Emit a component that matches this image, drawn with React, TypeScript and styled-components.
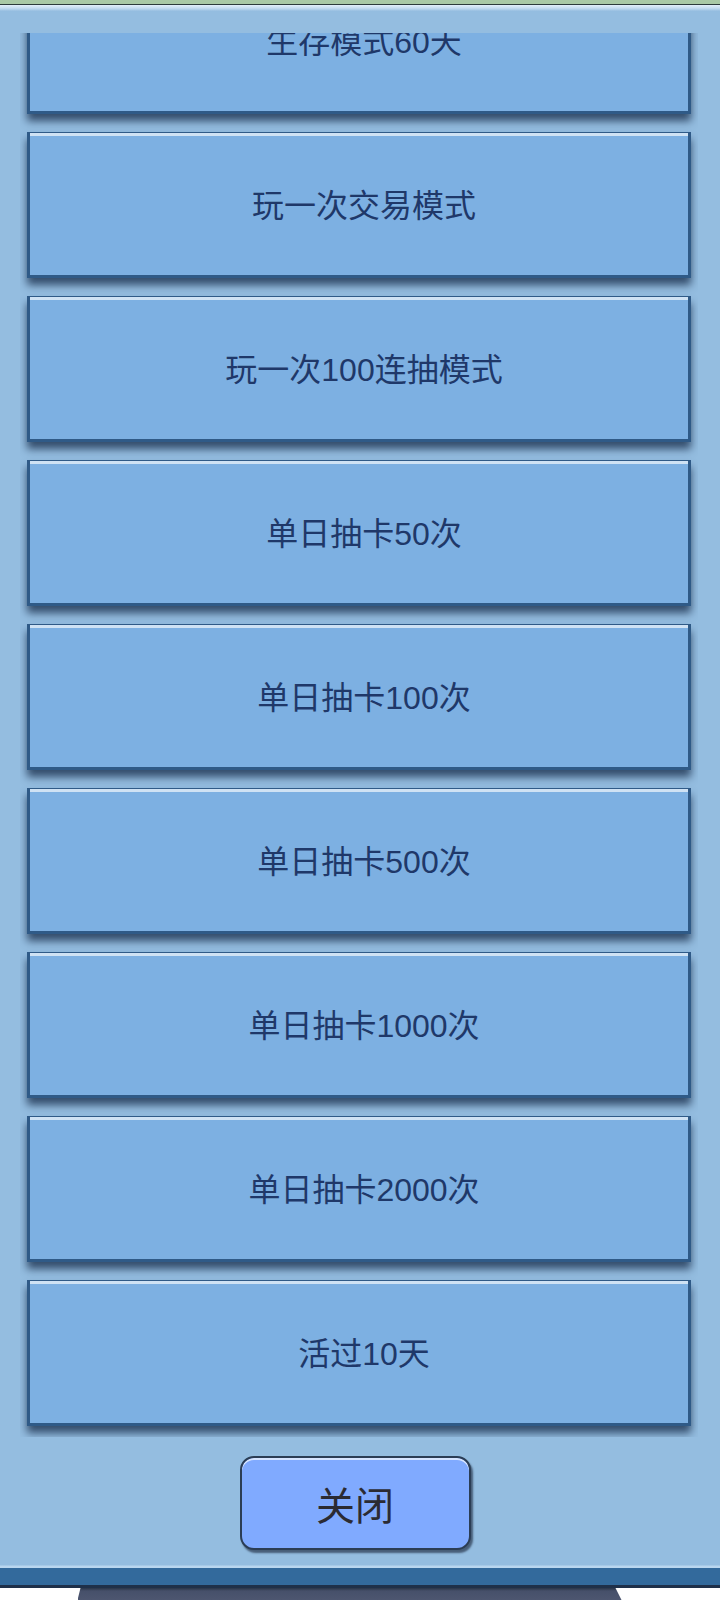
import React, { useLayoutEffect, useRef } from "react";
import styled, { createGlobalStyle } from "styled-components";

const GlobalStyle = createGlobalStyle`
  html, body {
    margin: 0;
    padding: 0;
    background: #ffffff;
  }
  * { box-sizing: border-box; }
`;

const Screen = styled.div`
  width: 720px;
  height: 1600px;
  display: flex;
  flex-direction: column;
  font-family: "Liberation Sans", "Noto Sans CJK SC", sans-serif;
  overflow: hidden;
`;

const TopStrip = styled.div`
  height: 5px;
  flex-shrink: 0;
  background: #a9c9a5;
  border-bottom: 1px solid #2c3b3a;
`;

const Panel = styled.div`
  flex: 1;
  min-height: 0;
  display: flex;
  flex-direction: column;
  padding: 28px 22px 0 20px;
  background: linear-gradient(
    #e2eff9 0px,
    #c6ddf0 3px,
    #a9cae7 5px,
    #94bde0 6px,
    #94bde0 calc(100% - 3px),
    #b9d6ef calc(100% - 2px),
    #b9d6ef 100%
  );
`;

const ScrollArea = styled.div`
  flex: 1;
  min-height: 0;
  overflow-y: auto;
  scrollbar-width: none;
  display: flex;
  flex-direction: column;
  gap: 18px;
  padding: 0 7px 11px 7px;
  &::-webkit-scrollbar { display: none; }
`;

const Card = styled.div`
  flex-shrink: 0;
  height: 146px;
  display: flex;
  align-items: center;
  justify-content: center;
  padding: 0 0 3px 10px;
  background: #7db0e2;
  border: 3px solid #2f5a87;
  border-top-width: 1px;
  box-shadow:
    inset 0 3px 0 #cfe2f4,
    0 7px 8px rgba(20, 40, 70, 0.75);
  color: #1f3869;
  font-size: 32px;
`;

const Footer = styled.div`
  height: 131px;
  flex-shrink: 0;
  display: flex;
  align-items: flex-start;
  justify-content: center;
  padding-top: 19px;
  padding-right: 8px;
`;

const CloseButton = styled.button`
  width: 231px;
  height: 94px;
  border: 2px solid #2b3d55;
  border-radius: 14px;
  background: #80aaff;
  box-shadow:
    inset 0 2px 0 #d6e4ff,
    2px 3px 2px rgba(20, 30, 50, 0.6);
  color: #2b2b33;
  font-family: "Liberation Sans", "Noto Sans CJK SC", sans-serif;
  font-size: 39px;
  padding: 0;
  cursor: pointer;
`;

const BottomBar = styled.div`
  height: 20px;
  flex-shrink: 0;
  background: #336a9c;
  border-bottom: 3px solid #1f3049;
`;

const Base = styled.div`
  height: 12px;
  flex-shrink: 0;
  display: flex;
  justify-content: center;
  background: #ffffff;
`;

const Stand = styled.div`
  width: 544px;
  height: 100%;
  margin-right: 21px;
  background: linear-gradient(#2a3548 0, #46506a 3px, #4d5670 100%);
  clip-path: polygon(3px 0, calc(100% - 6px) 0, 100% 100%, 0 100%);
`;

const items = [
  "生存模式10天",
  "生存模式30天",
  "生存模式60天",
  "玩一次交易模式",
  "玩一次100连抽模式",
  "单日抽卡50次",
  "单日抽卡100次",
  "单日抽卡500次",
  "单日抽卡1000次",
  "单日抽卡2000次",
  "活过10天",
];

export default function App() {
  const listRef = useRef<HTMLDivElement>(null);

  useLayoutEffect(() => {
    const el = listRef.current;
    if (el) el.scrollTop = el.scrollHeight - el.clientHeight;
  }, []);

  return (
    <>
      <GlobalStyle />
      <Screen>
        <TopStrip />
        <Panel>
          <ScrollArea ref={listRef}>
            {items.map((t) => (
              <Card key={t}>{t}</Card>
            ))}
          </ScrollArea>
          <Footer>
            <CloseButton>关闭</CloseButton>
          </Footer>
        </Panel>
        <BottomBar />
        <Base>
          <Stand />
        </Base>
      </Screen>
    </>
  );
}
